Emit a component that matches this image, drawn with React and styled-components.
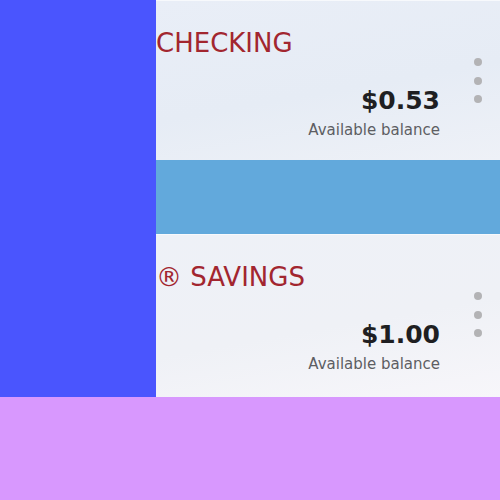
import styled, { createGlobalStyle } from 'styled-components';

const GlobalStyle = createGlobalStyle`
  html, body {
    margin: 0;
    padding: 0;
    background: #d898fe;
  }
  * { box-sizing: border-box; }
`;

const accounts = [
  { name: 'CHECKING', amount: '$0.53', height: 160 },
  { name: '® SAVINGS', amount: '$1.00', height: 163 },
];

export default function App() {
  return (
    <>
      <GlobalStyle />
      <Page>
        <Sidebar />
        <Main>
          <Card $height={accounts[0].height} $tone="top">
            <AccountContent account={accounts[0]} />
          </Card>
          <Band />
          <Card $height={accounts[1].height} $tone="bottom">
            <AccountContent account={accounts[1]} />
          </Card>
        </Main>
      </Page>
      <Footer />
    </>
  );
}

function AccountContent({ account }) {
  return (
    <>
      <Title>{account.name}</Title>
      <Menu>
        <Dot />
        <Dot />
        <Dot />
      </Menu>
      <Balance>
        <Amount>{account.amount}</Amount>
        <Label>Available balance</Label>
      </Balance>
    </>
  );
}

const Page = styled.div`
  display: flex;
  width: 500px;
  height: 397px;
`;

const Sidebar = styled.div`
  width: 156px;
  flex-shrink: 0;
  background: #4a55fe;
`;

const Main = styled.div`
  flex: 1;
  display: flex;
  flex-direction: column;
`;

const Card = styled.div`
  height: ${p => p.$height}px;
  display: grid;
  grid-template-columns: 1fr 40px;
  grid-template-rows: auto 1fr;
  padding-top: 27px;
  border-top: 1px solid #f7f9fc;
  background: ${p =>
    p.$tone === 'top'
      ? 'linear-gradient(170deg, #e9eef7 0%, #e6ecf5 55%, #eef1f7 100%)'
      : 'linear-gradient(170deg, #eef1f7 0%, #eff1f6 55%, #f7f6fa 100%)'};
  font-family: 'DejaVu Sans', Verdana, sans-serif;
`;

const Title = styled.div`
  grid-column: 1 / 3;
  font-size: 26px;
  line-height: 30px;
  color: #a2262f;
`;

const Menu = styled.div`
  grid-column: 2;
  grid-row: 2 / 3;
  display: flex;
  flex-direction: column;
  align-items: center;
  gap: 10.5px;
  margin-top: 0;
  margin-left: -4px;
`;

const Dot = styled.span`
  width: 8px;
  height: 8px;
  border-radius: 50%;
  background: #b3b3b5;
`;

const Balance = styled.div`
  grid-column: 1;
  grid-row: 2;
  justify-self: end;
  text-align: right;
  padding-right: 20px;
  margin-top: 29px;
`;

const Amount = styled.div`
  font-size: 25px;
  font-weight: 700;
  line-height: 28px;
  color: #1f1f22;
`;

const Label = styled.div`
  font-size: 15px;
  line-height: 18px;
  margin-top: 6px;
  color: #5d5e63;
`;

const Band = styled.div`
  height: 74px;
  background: #62a9dc;
`;

const Footer = styled.div`
  height: 103px;
  background: #d898fe;
`;
